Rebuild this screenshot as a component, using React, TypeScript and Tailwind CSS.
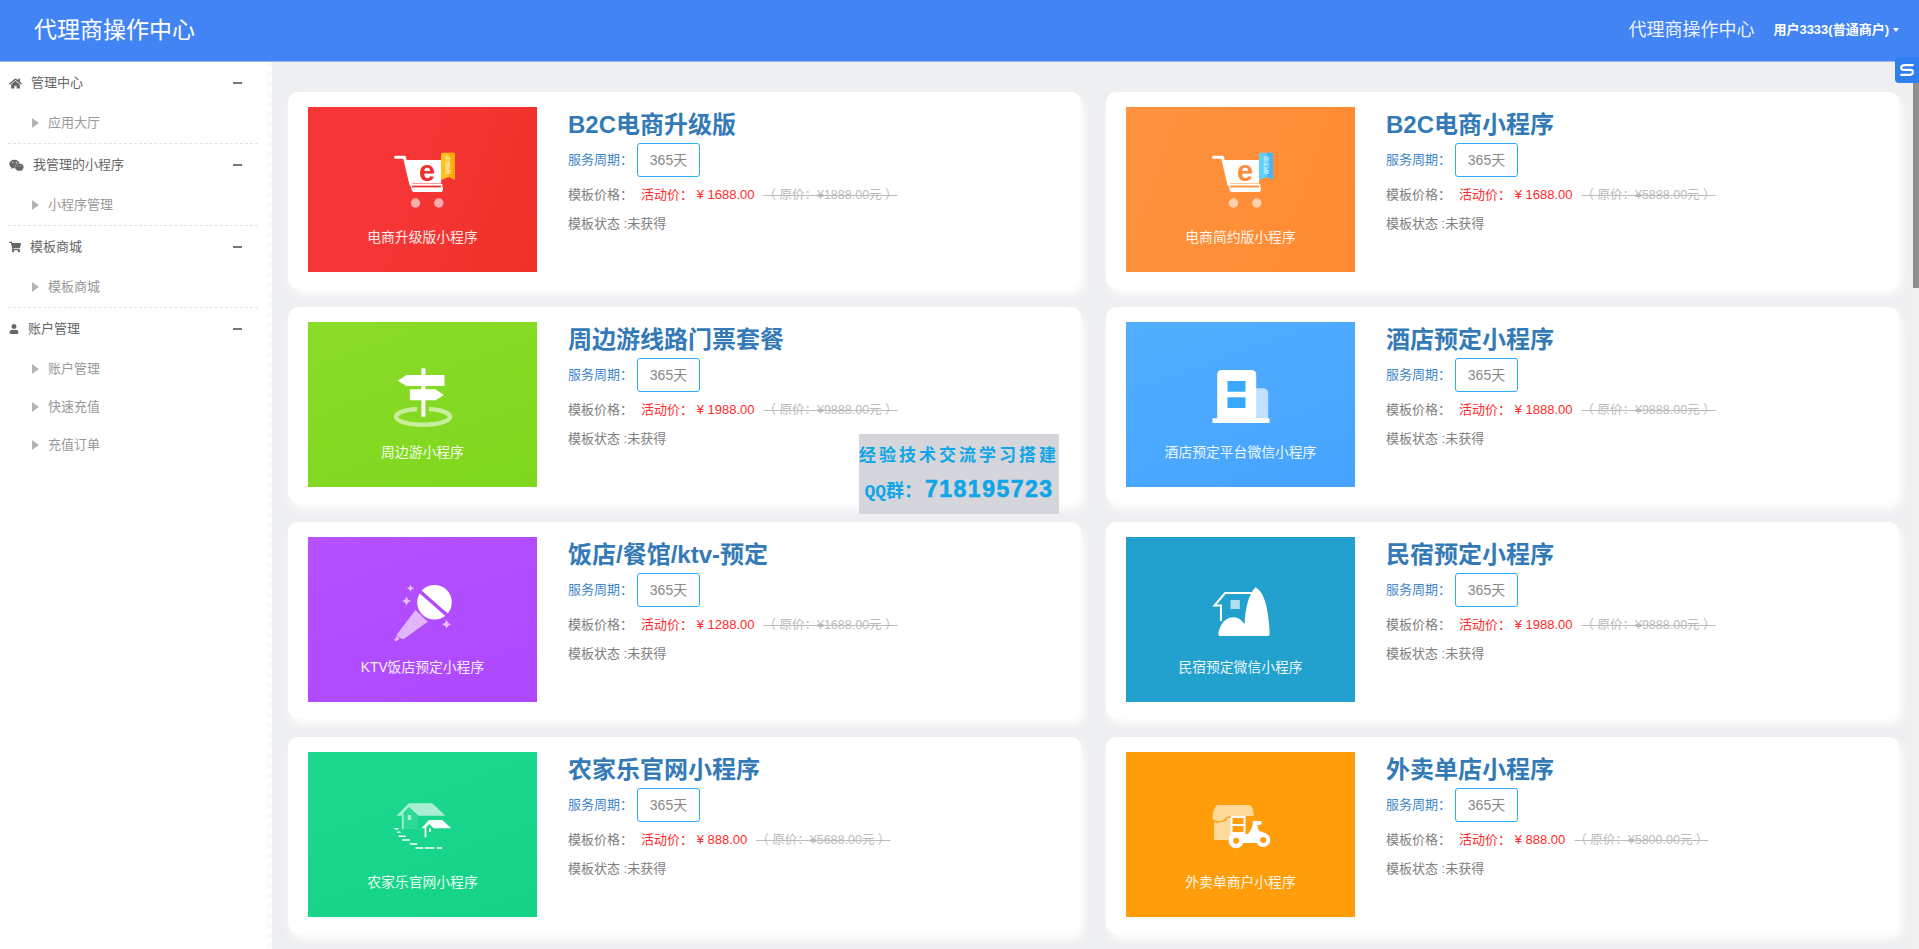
import React from "react";
import { FaHome, FaWeixin, FaShoppingCart, FaUser } from "react-icons/fa";

const FONT = "font-['Liberation_Sans','Noto_Sans_CJK_SC',sans-serif]";

const CartIcon = ({ tint, ribbon, ribbonEnd, tag }: { tint: string; ribbon: string; ribbonEnd: string; tag: string }) => (
  <svg viewBox="0 0 64 64" className="w-16 h-16">
    <path d="M4.5 8.3H13.5L20 36H50" fill="none" stroke="#fff" strokeWidth="3" strokeLinecap="round" strokeLinejoin="round" />
    <path d="M14.5 11H52L50 34H20Z" fill="#fff" />
    <path d="M20 37H51Q53 39 51 43H22Q20 41 20 37Z" fill="#fff" />
    <path d="M21 37.5H50" stroke={tint} strokeWidth="1.8" />
    <circle cx="24.5" cy="54" r="4.7" fill="#fff" opacity="0.6" />
    <circle cx="47.8" cy="54" r="4.7" fill="#fff" opacity="0.6" />
    <text x="36" y="32" textAnchor="middle" fontSize="29" fontWeight="700" fill={tint} fontFamily="Liberation Sans">e</text>
    <path d="M52 3.7H62.5Q64.5 3.7 64.5 6V31L58 28L50 31V6Q50 3.7 52 3.7Z" fill={ribbon} />
    <path d="M58 3.7H62.5Q64.5 3.7 64.5 6V31L58 28Z" fill={ribbonEnd} opacity="0.6" />
    <text x="57.3" y="7" fontSize="6" fill="#fff" opacity="0.85" style={{ writingMode: "vertical-rl" }} textAnchor="start" fontFamily="Noto Sans CJK SC">{tag}</text>
  </svg>
);

const SignIcon = () => (
  <svg viewBox="0 0 64 64" className="w-16 h-16">
    <path d="M26 45A27 8 0 1 0 38 45" fill="none" stroke="#fff" strokeOpacity="0.55" strokeWidth="4.4" />
    <rect x="30.4" y="4.3" width="4" height="48.5" fill="#fff" />
    <path d="M6.8 16.7L15.5 11H53.5V22H15.5Z" fill="#fff" />
    <path d="M18.8 25.3H44.5L52.8 31L44.5 36.3H18.8Z" fill="#fff" />
  </svg>
);

const HotelIcon = () => (
  <svg viewBox="0 0 64 64" className="w-16 h-16">
    <path d="M47 24.3H54Q59.2 24.3 59.2 30V55H47Z" fill="#fff" opacity="0.65" />
    <path d="M8.2 55V11Q8.2 6 13 6H42Q47.2 6 47.2 11V55Z" fill="#fff" />
    <rect x="18.5" y="17" width="18" height="10.7" fill="#38a8ff" />
    <rect x="18.5" y="33.3" width="18" height="10.7" fill="#38a8ff" />
    <rect x="3.5" y="54.3" width="57" height="4.7" fill="#fff" />
  </svg>
);

const Sparkle = ({ x, y, s }: { x: number; y: number; s: number }) => (
  <path
    d={`M${x} ${y - s}Q${x + s * 0.15} ${y - s * 0.15} ${x + s} ${y}Q${x + s * 0.15} ${y + s * 0.15} ${x} ${y + s}Q${x - s * 0.15} ${y + s * 0.15} ${x - s} ${y}Q${x - s * 0.15} ${y - s * 0.15} ${x} ${y - s}Z`}
    fill="#e6bfff"
  />
);

const MicIcon = () => (
  <svg viewBox="0 0 64 64" className="w-16 h-16">
    <Sparkle x={19.5} y={9.3} s={3.8} />
    <Sparkle x={15.5} y={22} s={5} />
    <Sparkle x={55.5} y={45.3} s={5} />
    <path d="M24.5 31L36.8 42.7L12.8 60Q9 60 5.5 56Z" fill="#e2b6ff" />
    <path d="M6 57L8.5 60L4.5 62.5L3 61Z" fill="#e2b6ff" />
    <circle cx="43.5" cy="23.3" r="17.3" fill="#fff" />
    <path d="M28.5 12L57 37" stroke="#b14bff" strokeWidth="3.6" />
  </svg>
);

const StayIcon = () => (
  <svg viewBox="0 0 64 64" className="w-16 h-16">
    <path d="M43 14H16L5.5 26.5H12V42" fill="none" stroke="#fff" strokeWidth="2" />
    <rect x="21.5" y="21" width="9.3" height="9" fill="#fff" opacity="0.65" />
    <path d="M11 57Q8.5 57 9.8 52Q14 38.3 24.8 38.3Q31 38.3 35.5 45.3Q37 18 46.5 8.3Q58 14 60.5 50V56Q60.5 57 58 57Z" fill="#fff" />
  </svg>
);

const FarmIcon = () => (
  <svg viewBox="0 0 64 64" className="w-16 h-16">
    <path d="M5.5 21.7L17.8 9.3H41.2L54.5 21.7H27.5L18 13L10 21.7Z" fill="#a8eed3" />
    <path d="M11.8 20V35.3" stroke="#a8eed3" strokeWidth="1.8" />
    <path d="M18 13L27 21.7V35H13V20Z" fill="#a8eed3" opacity="0.15" />
    <rect x="16.8" y="21" width="3.4" height="5" fill="#a8eed3" />
    <path d="M30.5 34.3L37.8 26H51.2L60.2 34.3H42.5L38.2 30L34.5 34.3Z" fill="#fff" />
    <path d="M34.5 33V43.3" stroke="#fff" strokeWidth="1.8" />
    <rect x="38" y="34.5" width="1.8" height="3.5" fill="#fff" />
    <path d="M3.5 34.7H7.5M6.2 38.3H9.5M7.8 42.3H14.8M11.2 46H18.8M18.8 50H26.2M24.5 54H32.2M33.8 54H43.5M45.8 54H51.2" stroke="#fff" strokeWidth="1.4" />
  </svg>
);

const ScooterIcon = () => (
  <svg viewBox="0 0 64 64" className="w-16 h-16">
    <path d="M8 11H40Q44 11 45 22H24Q17 22 15 26Q9 29 3.5 25Q3.5 15 8 11Z" fill="#ffd99a" />
    <path d="M5 28Q11 30 18 26V24H22V46H5Z" fill="#ffd99a" />
    <rect x="22.5" y="23" width="13" height="16" fill="#ff9d0a" stroke="#fff" strokeWidth="2" />
    <path d="M22 31H36" stroke="#fff" strokeWidth="2" />
    <path d="M46 27H52Q54 29 51 31H47Z" fill="#fff" />
    <path d="M20 43Q20 40 24 40H39Q44 34 44 27H47L50 37Q58 38 61 45L50 49H20Z" fill="#fff" />
    <circle cx="27.2" cy="46.7" r="7.5" fill="#fff" />
    <circle cx="27.2" cy="46.7" r="3" fill="#ff9d0a" />
    <circle cx="54.2" cy="46" r="7" fill="#fff" />
    <circle cx="54.2" cy="46" r="3" fill="#ff9d0a" />
  </svg>
);

const products = [
  { title: "B2C电商升级版", label: "电商升级版小程序", bg: "bg-[linear-gradient(110deg,#f63636_40%,#ee3026)]", icon: <CartIcon tint="#ef3030" ribbon="#ffc21a" ribbonEnd="#ff9a00" tag="升级版" />, price: "1688.00", old: "1888.00" },
  { title: "B2C电商小程序", label: "电商简约版小程序", bg: "bg-[linear-gradient(110deg,#ff9340,#ff8a30)]", icon: <CartIcon tint="#ff8d38" ribbon="#5fd0ff" ribbonEnd="#2fa8f0" tag="简约版" />, price: "1688.00", old: "5888.00" },
  { title: "周边游线路门票套餐", label: "周边游小程序", bg: "bg-[linear-gradient(160deg,#8adc28,#7fd71f)]", icon: <SignIcon />, price: "1988.00", old: "9888.00" },
  { title: "酒店预定小程序", label: "酒店预定平台微信小程序", bg: "bg-[linear-gradient(160deg,#52afff,#45a3ff)]", icon: <HotelIcon />, price: "1888.00", old: "9888.00" },
  { title: "饭店/餐馆/ktv-预定", label: "KTV饭店预定小程序", bg: "bg-[linear-gradient(160deg,#b551ff,#ae48ff)]", icon: <MicIcon />, price: "1288.00", old: "1688.00" },
  { title: "民宿预定小程序", label: "民宿预定微信小程序", bg: "bg-[#22a1cf]", icon: <StayIcon />, price: "1988.00", old: "9888.00" },
  { title: "农家乐官网小程序", label: "农家乐官网小程序", bg: "bg-[linear-gradient(160deg,#1cd990,#14d286)]", icon: <FarmIcon />, price: "888.00", old: "5688.00" },
  { title: "外卖单店小程序", label: "外卖单商户小程序", bg: "bg-[#ff9d0a]", icon: <ScooterIcon />, price: "888.00", old: "5800.00" },
];

const menu = [
  { name: "管理中心", icon: <FaHome className="text-[13px]" />, items: ["应用大厅"] },
  { name: "我管理的小程序", icon: <FaWeixin className="text-[15px]" />, items: ["小程序管理"] },
  { name: "模板商城", icon: <FaShoppingCart className="text-[12px]" />, items: ["模板商城"] },
  { name: "账户管理", icon: <FaUser className="text-[10px]" />, items: ["账户管理", "快速充值", "充值订单"] },
];

const Sidebar = () => (
  <aside className="w-[267px] shrink-0 bg-white border-r-[5px] border-dotted border-r-[#f7f7fc] box-content">
    {menu.map((group, i) => (
      <div key={group.name} className={i < menu.length - 1 ? "mx-[8px] w-[250px] border-b border-dashed border-[#e3e3e3] pb-px" : "mx-[8px] w-[250px]"}>
        <div className="h-[42px] flex items-center gap-[9px] pl-px pr-[16px] text-[13px] text-[#666]">
          {group.icon}
          <span className="flex-1">{group.name}</span>
          <span className="w-[9px] h-[2px] bg-[#777]" />
        </div>
        {group.items.map((item) => (
          <div key={item} className="h-[38px] flex items-center pl-[24px] text-[13px] text-[#999]">
            <span className="w-0 h-0 border-y-[5px] border-y-transparent border-l-[7px] border-l-[#b5b5b5] mr-[9px]" />
            {item}
          </div>
        ))}
      </div>
    ))}
  </aside>
);

const Card = ({ p }: { p: (typeof products)[number] }) => (
  <div className="h-[196px] bg-white rounded-[10px] shadow-[3px_6px_10px_#fff] pl-[20px] pt-[15px] flex">
    <div className={`w-[229px] h-[165px] shrink-0 flex flex-col items-center pt-[42px] ${p.bg}`}>
      {p.icon}
      <span className="mt-[16px] text-[13.8px] leading-[18px] text-white/90 whitespace-nowrap">{p.label}</span>
    </div>
    <div className="ml-[31px] flex flex-col text-[13px] text-[#808080]">
      <h2 className="h-[34px] pt-px leading-[34px] text-[24px] font-bold text-[#337ab7] whitespace-nowrap">{p.title}</h2>
      <div className="mt-[2px] flex items-center gap-[4px]">
        <span className="text-[#3f87c9] -mt-px">服务周期：</span>
        <span className="w-[63px] h-[34px] flex items-center justify-center border border-[#29aaff] rounded-[3px] text-[14px] text-[#888]">365天</span>
      </div>
      <div className="mt-[9px] h-[18px] flex items-center whitespace-pre">
        <span>模板价格：</span>
        <span className="ml-[8px] text-[#ff2a2a]">活动价： ¥ {p.price}</span>
        <span className="ml-[9px] text-[12.5px] text-[#bbb] line-through">（ 原价：¥{p.old}元 ）</span>
      </div>
      <div className="mt-[11px] h-[18px] flex items-center">模板状态 :未获得</div>
    </div>
  </div>
);

export default function App() {
  return (
    <div className={`relative h-screen overflow-hidden bg-[#eeeff1] flex flex-col ${FONT}`}>
      <header className="h-[62px] shrink-0 bg-[#4284f3] flex items-center text-white border-b border-[#9db8e8]">
        <span className="ml-[34px] text-[23px]">代理商操作中心</span>
        <span className="ml-auto text-[18px] opacity-90 -mt-[1px]">代理商操作中心</span>
        <span className="ml-[19px] mr-[20px] flex items-center text-[13px] font-bold -mt-[2px]">
          用户3333(普通商户)
          <span className="ml-[4px] w-0 h-0 border-x-[3.5px] border-x-transparent border-t-[4px] border-t-white" />
        </span>
      </header>
      <div className="flex flex-1 min-h-0">
        <Sidebar />
        <main className="flex-1 pt-[30px] pl-[16px]">
          <div className="grid grid-cols-[793px_793px] gap-x-[25px] gap-y-[19px]">
            {products.map((p) => (
              <Card key={p.title} p={p} />
            ))}
          </div>
        </main>
      </div>

      {/* watermark over the card */}
      <div className="absolute left-[859px] top-[434px] w-[200px] h-[80px] bg-[#d5d5dc] flex flex-col items-center text-[#0ea6e6] font-bold">
        <span className="mt-[11px] text-[17px] leading-[22px] tracking-[3px] whitespace-nowrap">经验技术交流学习搭建</span>
        <span className="mt-[9px] leading-[26px] flex items-baseline whitespace-nowrap">
          <span className="text-[18px] font-['Liberation_Mono','Noto_Sans_CJK_SC',monospace]">QQ群：</span>
          <span className="text-[23px] tracking-[1.5px] ml-[3px] [-webkit-text-stroke:0.6px_#0ea6e6]">718195723</span>
        </span>
      </div>

      {/* scrollbar and the floating button */}
      <div className="absolute right-0 top-[62px] bottom-0 w-[6px] bg-[#f1f1f1]" />
      <div className="absolute right-0 top-[83px] w-[6px] h-[205px] bg-[#8f8f8f]" />
      <div className="absolute right-0 top-[57px] w-[24px] h-[26px] bg-[#2f7ff0] rounded-l-[4px] flex items-center justify-center">
        <svg viewBox="0 0 20 20" className="w-[18px] h-[18px]">
          <path d="M16.5 4.5H8Q3.5 4.5 3.5 7.5Q3.5 9.8 6 9.8H14Q16.5 9.8 16.5 12.5Q16.5 15.5 12 15.5H3.5" fill="none" stroke="#fff" strokeWidth="2.4" strokeLinecap="round" />
        </svg>
      </div>
    </div>
  );
}
